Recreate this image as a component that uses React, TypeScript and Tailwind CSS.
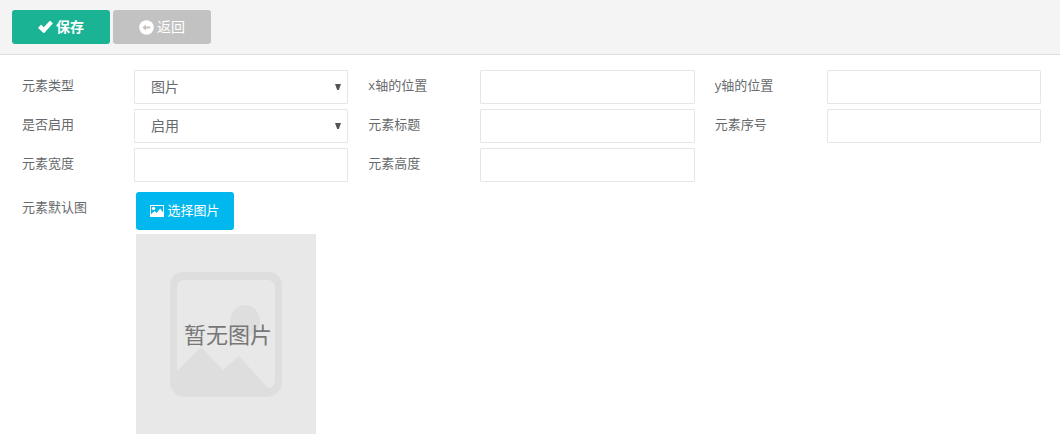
import React, { useState } from "react";

interface FieldProps {
  id: string;
  label: string;
  children: React.ReactNode;
}

const controlClass =
  "block h-[34px] w-full rounded-[1px] border border-[#e5e6e7] bg-white text-sm text-[#676a6c] outline-none focus:border-[#1ab394]";

const Field = ({ id, label, children }: FieldProps) => (
  <div className="flex items-start">
    <label htmlFor={id} className="w-28 shrink-0 pt-1.5 text-[13px] leading-[18px]">
      {label}
    </label>
    <div className="min-w-0 flex-1">{children}</div>
  </div>
);

const TextField = ({ id, label }: { id: string; label: string }) => {
  const [value, setValue] = useState("");
  return (
    <Field id={id} label={label}>
      <input
        id={id}
        type="text"
        value={value}
        onChange={(e) => setValue(e.target.value)}
        className={`${controlClass} px-3`}
      />
    </Field>
  );
};

const SelectField = ({ id, label, options }: { id: string; label: string; options: string[] }) => {
  const [value, setValue] = useState(options[0]);
  return (
    <Field id={id} label={label}>
      <div className="relative">
        <select
          id={id}
          value={value}
          onChange={(e) => setValue(e.target.value)}
          className={`${controlClass} appearance-none pl-4 pr-6`}
        >
          {options.map((option) => (
            <option key={option}>{option}</option>
          ))}
        </select>
        <svg
          viewBox="0 0 6 6"
          className="pointer-events-none absolute top-3.5 right-[7px] h-1.5 w-1.5"
          fill="#555"
          aria-hidden="true"
        >
          <path d="M0 0h6L3.8 6H2.2z" />
        </svg>
      </div>
    </Field>
  );
};

const CheckIcon = () => (
  <svg viewBox="0 0 15 14" className="h-3.5 w-[15px]" fill="currentColor" aria-hidden="true">
    <path d="M.4 7.5 2.7 5q.4-.4.8 0l2.3 2.3L11.6 1q.4-.4.8 0l2.2 2q.4.4 0 .8L6.3 12.9q-.4.4-.8 0L.4 8.3q-.4-.4 0-.8z" />
  </svg>
);

const BackIcon = () => (
  <svg viewBox="0 0 15 15" className="h-[15px] w-[15px]" aria-hidden="true">
    <circle cx="7.5" cy="7.5" r="7.3" fill="currentColor" />
    <path d="M3.4 7.5 7 4.4V6.4H11.2V8.6H7V10.6z" fill="#c2c2c2" />
  </svg>
);

const PictureIcon = () => (
  <svg viewBox="0 0 14 12" className="h-3 w-3.5" aria-hidden="true">
    <path
      fill="currentColor"
      fillRule="evenodd"
      d="M0 0h14v12H0zM1 1v8.6L4.4 6l2.2 2 3.6-4.4L13 7.4V1z"
    />
    <circle cx="3.6" cy="3.4" r="1.7" fill="currentColor" />
  </svg>
);

const EmptyPicture = () => (
  <div className="relative h-[200px] w-[180px] bg-[#e8e8e8]">
    <svg viewBox="0 0 180 200" className="block h-full w-full" fill="#dedede" aria-hidden="true">
      <path
        fillRule="evenodd"
        d="M47 38h86a13 13 0 0 1 13 13v97a15 15 0 0 1-15 15H49a15 15 0 0 1-15-15V51a13 13 0 0 1 13-13zM48 46a7 7 0 0 0-7 7v84l24-24 22 23 16-14 27 30q3 4 7 0 2-2 2-5V53a7 7 0 0 0-7-7z"
      />
      <ellipse cx="109" cy="87" rx="15" ry="16" />
    </svg>
    <span className="absolute inset-0 flex items-center justify-center pl-1 text-[22px] leading-8 text-[#777]">
      暂无图片
    </span>
  </div>
);

export default function App() {
  return (
    <form
      className="min-h-screen bg-white font-['Open_Sans','Noto_Sans_CJK_SC',sans-serif] text-[#676a6c]"
      onSubmit={(e) => e.preventDefault()}
    >
      <div className="flex gap-[3px] border-b border-[#dddddd] bg-[#f4f4f4] px-3 py-2.5">
        <button
          type="submit"
          className="flex h-[34px] w-[98px] items-center justify-center gap-[3px] rounded-[3px] bg-[#1ab394] text-sm font-bold text-white"
        >
          <CheckIcon />
          保存
        </button>
        <button
          type="button"
          className="flex h-[34px] w-[98px] items-center justify-center gap-[3px] rounded-[3px] bg-[#c2c2c2] text-sm text-white"
        >
          <BackIcon />
          返回
        </button>
      </div>

      <div className="pt-[15px] pr-[19px] pb-2.5 pl-[22px]">
        <div className="grid grid-cols-3 gap-x-5 gap-y-[5px]">
          <SelectField id="type" label="元素类型" options={["图片", "文字"]} />
          <TextField id="pos-x" label="x轴的位置" />
          <TextField id="pos-y" label="y轴的位置" />
          <SelectField id="enabled" label="是否启用" options={["启用", "禁用"]} />
          <TextField id="title" label="元素标题" />
          <TextField id="sort" label="元素序号" />
          <TextField id="width" label="元素宽度" />
          <TextField id="height" label="元素高度" />
        </div>

        <div className="mt-2.5">
          <Field id="picture" label="元素默认图">
            <div className="flex flex-col items-start gap-1 pl-0.5">
              <button
                id="picture"
                type="button"
                className="flex h-[38px] w-[98px] items-center justify-center gap-[3px] rounded-[3px] bg-[#00b7ee] text-[13px] text-white"
              >
                <PictureIcon />
                选择图片
              </button>
              <EmptyPicture />
            </div>
          </Field>
        </div>
      </div>
    </form>
  );
}
